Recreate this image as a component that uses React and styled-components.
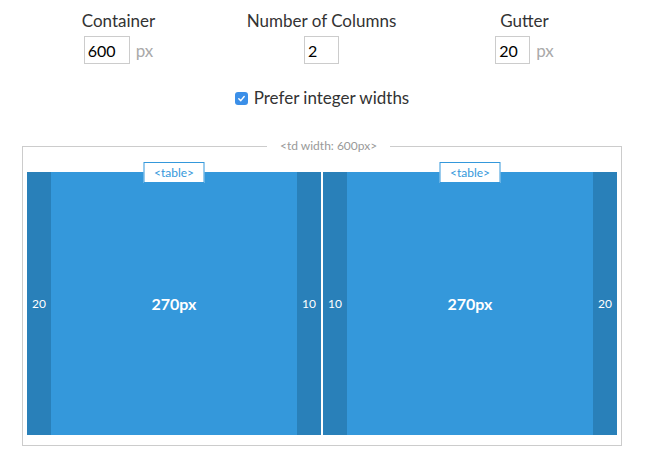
import React from "react";
import styled, { createGlobalStyle } from "styled-components";

const GlobalStyle = createGlobalStyle`
  body {
    margin: 0;
    background: #fff;
    font-family: Lato, "Open Sans", sans-serif;
    color: #333;
  }
`;

// Page wrapper, same width as the td box
const Page = styled.div`
  width: 600px;
  margin-left: 22px;
  padding-top: 11px;
`;

// Top row of three settings
const Controls = styled.div`
  display: grid;
  grid-template-columns: repeat(3, 203px);
  margin: 0 -4px 0 -5px;
`;

const Setting = styled.div`
  display: flex;
  flex-direction: column;
  align-items: center;
`;

const SettingLabel = styled.div`
  font-size: 17px;
  line-height: 20px;
  height: 20px;
  margin-bottom: 5px;
  color: #333;
`;

const Field = styled.div`
  display: flex;
  align-items: center;
`;

const NumberInput = styled.input`
  box-sizing: border-box;
  width: ${(p) => p.$width}px;
  height: 28px;
  border: 1px solid #ccc;
  padding: 0 3px;
  font-family: Lato, "Open Sans", sans-serif;
  font-size: 16px;
  color: #000;
  outline: none;
`;

const Unit = styled.span`
  margin-left: 6px;
  font-size: 17px;
  color: #aaa;
`;

const CheckRow = styled.label`
  display: flex;
  justify-content: center;
  align-items: center;
  gap: 6px;
  margin-top: 24px;
  font-size: 17px;
  line-height: 20px;
  color: #333;
`;

const CheckBox = styled.span`
  display: inline-flex;
  align-items: center;
  justify-content: center;
  width: 13px;
  height: 13px;
  border-radius: 3px;
  background: #3b8fe8;
`;

// Outer td box
const TdBox = styled.div`
  position: relative;
  box-sizing: border-box;
  width: 600px;
  margin-top: 38px;
  border: 1px solid #ccc;
  padding: 25px 4px 10px 4px;
`;

const TdLegend = styled.span`
  position: absolute;
  top: -8px;
  left: 244px;
  padding: 0 13px;
  background: #fff;
  font-size: 12px;
  line-height: 14px;
  color: #999;
`;

const Columns = styled.div`
  display: flex;
  gap: 2px;
`;

const Column = styled.div`
  position: relative;
  display: flex;
  width: 294px;
  height: 263px;
`;

const TableTag = styled.span`
  position: absolute;
  top: -10px;
  left: 50%;
  transform: translateX(-50%);
  box-sizing: border-box;
  width: 61px;
  height: 21px;
  border: 1px solid #3498db;
  background: #fff;
  color: #3498db;
  font-size: 12px;
  line-height: 19px;
  text-align: center;
`;

const Strip = styled.div`
  width: 24px;
  display: flex;
  align-items: center;
  justify-content: center;
  background: #2980b9;
  color: #fff;
  font-size: 12px;
`;

const Main = styled.div`
  flex: 1;
  display: flex;
  align-items: center;
  justify-content: center;
  background: #3498db;
  color: #fff;
  font-size: 16px;
  font-weight: bold;
`;

const columns = [
  { left: 20, width: 270, right: 10 },
  { left: 10, width: 270, right: 20 },
];

const App = () => {
  return (
    <>
      <GlobalStyle />
      <Page>
        <Controls>
          <Setting>
            <SettingLabel>Container</SettingLabel>
            <Field>
              <NumberInput $width={46} value="600" readOnly />
              <Unit>px</Unit>
            </Field>
          </Setting>
          <Setting>
            <SettingLabel>Number of Columns</SettingLabel>
            <Field>
              <NumberInput $width={35} value="2" readOnly />
            </Field>
          </Setting>
          <Setting>
            <SettingLabel>Gutter</SettingLabel>
            <Field>
              <NumberInput $width={35} value="20" readOnly />
              <Unit>px</Unit>
            </Field>
          </Setting>
        </Controls>

        <CheckRow>
          <CheckBox>
            <svg width="9" height="9" viewBox="0 0 10 10">
              <path d="M2 5.2 L4.2 7.4 L8 2.8" fill="none" stroke="#fff" strokeWidth="1.6" strokeLinecap="round" strokeLinejoin="round" />
            </svg>
          </CheckBox>
          Prefer integer widths
        </CheckRow>

        <TdBox>
          <TdLegend>&lt;td width: 600px&gt;</TdLegend>
          <Columns>
            {columns.map((c, i) => (
              <Column key={i}>
                <TableTag>&lt;table&gt;</TableTag>
                <Strip>{c.left}</Strip>
                <Main>{c.width}px</Main>
                <Strip>{c.right}</Strip>
              </Column>
            ))}
          </Columns>
        </TdBox>
      </Page>
    </>
  );
};

export default App;
